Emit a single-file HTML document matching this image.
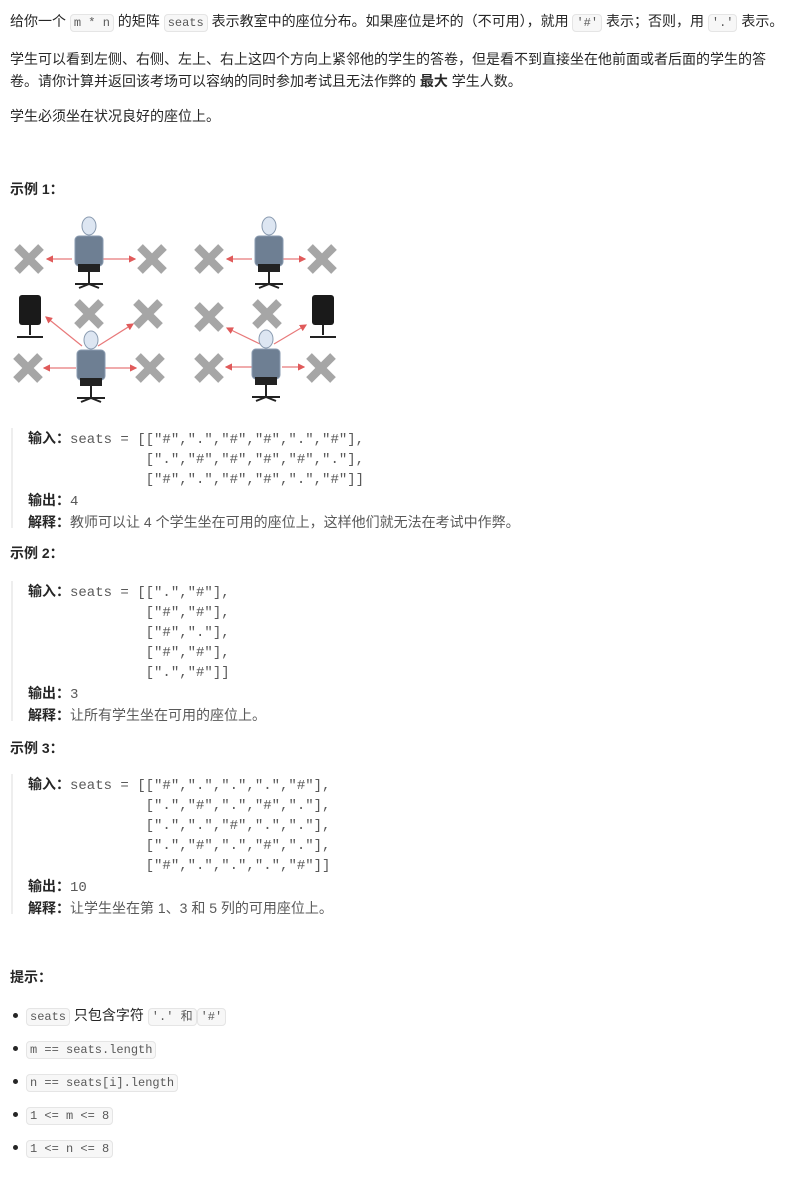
<!DOCTYPE html>
<html><head><meta charset="utf-8"><style>
body{margin:0;background:#fff;width:800px;height:1183px;position:relative;font-family:"Liberation Sans","Noto Sans CJK SC",sans-serif;font-size:14px;color:#262626;}
.a{position:absolute;white-space:pre;line-height:20px;}
code{font-family:"Liberation Mono",monospace;font-size:12px;background:#f7f7f7;border:1px solid #e5e5e5;border-radius:4px;padding:1px 3px;color:#595959;}
.m{font-family:"Liberation Mono","Noto Sans CJK SC",monospace;font-size:14px;color:#595959;}
.m b,.m span{font-family:"Liberation Sans","Noto Sans CJK SC",sans-serif;}
b{color:#262626;}
.bar{position:absolute;left:11px;width:2px;background:#eee;}
.dot{position:absolute;left:13px;width:5px;height:5px;border-radius:50%;background:#262626;}
</style></head><body>
<div class="a" style="left:10px;top:11px">给你一个 <code>m * n</code> 的矩阵 <code>seats</code> 表示教室中的座位分布。如果座位是坏的（不可用），就用 <code>'#'</code> 表示；否则，用 <code>'.'</code> 表示。</div>
<div class="a" style="left:10px;top:48px;line-height:22px">学生可以看到左侧、右侧、左上、右上这四个方向上紧邻他的学生的答卷，但是看不到直接坐在他前面或者后面的学生的答
卷。请你计算并返回该考场可以容纳的同时参加考试且无法作弊的 <b>最大</b> 学生人数。</div>
<div class="a" style="left:10px;top:106px">学生必须坐在状况良好的座位上。</div>
<div class="a" style="left:10px;top:179px"><b>示例 1：</b></div>

<svg style="position:absolute;left:0;top:200px" width="350" height="210" viewBox="0 0 350 210">
<defs>
<g id="x"><path d="M-12,-12L12,12M12,-12L-12,12" stroke="#a6a6a6" stroke-width="8"/></g>
<g id="p"><ellipse cx="0" cy="-24" rx="7" ry="9" fill="#dde6f2" stroke="#8a9bb0"/><rect x="-14" y="-14" width="28" height="30" rx="4" fill="#6e7f93" stroke="#8a9bb0"/><rect x="-11" y="14" width="22" height="8" fill="#222"/><path d="M0,22V34M-14,34H14M-10,38L0,34L10,38" stroke="#222" stroke-width="2" fill="none"/></g>
<g id="c"><rect x="-11" y="-20" width="22" height="30" rx="3" fill="#1a1a1a"/><path d="M0,10V20M-13,22H13" stroke="#222" stroke-width="2"/></g>
<marker id="ar" markerWidth="6" markerHeight="6" refX="5" refY="3" orient="auto"><path d="M0,0L6,3L0,6z" fill="#e05a5a"/></marker>
</defs>
<g stroke="#e8797a" stroke-width="1.2" marker-end="url(#ar)">
<line x1="72" y1="59" x2="47" y2="59"/><line x1="103" y1="59" x2="135" y2="59"/>
<line x1="252" y1="59" x2="227" y2="59"/><line x1="283" y1="59" x2="305" y2="59"/>
<line x1="82" y1="146" x2="46" y2="117"/><line x1="98" y1="146" x2="133" y2="124"/>
<line x1="76" y1="168" x2="44" y2="168"/><line x1="105" y1="168" x2="136" y2="168"/>
<line x1="260" y1="144" x2="227" y2="128"/><line x1="274" y1="144" x2="306" y2="125"/>
<line x1="254" y1="167" x2="226" y2="167"/><line x1="282" y1="167" x2="304" y2="167"/>
</g>
<use href="#x" x="29" y="59"/><use href="#x" x="152" y="59"/><use href="#x" x="209" y="59"/><use href="#x" x="322" y="59"/>
<use href="#x" x="89" y="114"/><use href="#x" x="148" y="114"/><use href="#x" x="209" y="117"/><use href="#x" x="267" y="114"/>
<use href="#x" x="28" y="168"/><use href="#x" x="150" y="168"/><use href="#x" x="209" y="168"/><use href="#x" x="321" y="168"/>
<use href="#p" x="89" y="50"/><use href="#p" x="269" y="50"/><use href="#p" x="91" y="164"/><use href="#p" x="266" y="163"/>
<use href="#c" x="30" y="115"/><use href="#c" x="323" y="115"/>
</svg>

<div class="bar" style="top:428px;height:100px"></div>
<div class="a m" style="left:28px;top:428px"><b>输入：</b>seats = [["#",".","#","#",".","#"],
              [".","#","#","#","#","."],
              ["#",".","#","#",".","#"]]
<b>输出：</b>4
<b>解释：</b><span>教师可以让 4 个学生坐在可用的座位上，这样他们就无法在考试中作弊。</span></div>

<div class="a" style="left:10px;top:543px"><b>示例 2：</b></div>
<div class="bar" style="top:581px;height:140px"></div>
<div class="a m" style="left:28px;top:581px"><b>输入：</b>seats = [[".","#"],
              ["#","#"],
              ["#","."],
              ["#","#"],
              [".","#"]]
<b>输出：</b>3
<b>解释：</b><span>让所有学生坐在可用的座位上。</span></div>

<div class="a" style="left:10px;top:738px"><b>示例 3：</b></div>
<div class="bar" style="top:774px;height:140px"></div>
<div class="a m" style="left:28px;top:774px"><b>输入：</b>seats = [["#",".",".",".","#"],
              [".","#",".","#","."],
              [".",".","#",".","."],
              [".","#",".","#","."],
              ["#",".",".",".","#"]]
<b>输出：</b>10
<b>解释：</b><span>让学生坐在第 1、3 和 5 列的可用座位上。</span></div>

<div class="a" style="left:10px;top:967px"><b>提示：</b></div>
<div class="dot" style="top:1013px"></div><div class="a" style="left:26px;top:1005px"><code>seats</code> 只包含字符 <code>'.' 和</code><code>'#'</code></div>
<div class="dot" style="top:1046px"></div><div class="a" style="left:26px;top:1038px"><code>m == seats.length</code></div>
<div class="dot" style="top:1079px"></div><div class="a" style="left:26px;top:1071px"><code>n == seats[i].length</code></div>
<div class="dot" style="top:1112px"></div><div class="a" style="left:26px;top:1104px"><code>1 &lt;= m &lt;= 8</code></div>
<div class="dot" style="top:1145px"></div><div class="a" style="left:26px;top:1137px"><code>1 &lt;= n &lt;= 8</code></div>
</body></html>
